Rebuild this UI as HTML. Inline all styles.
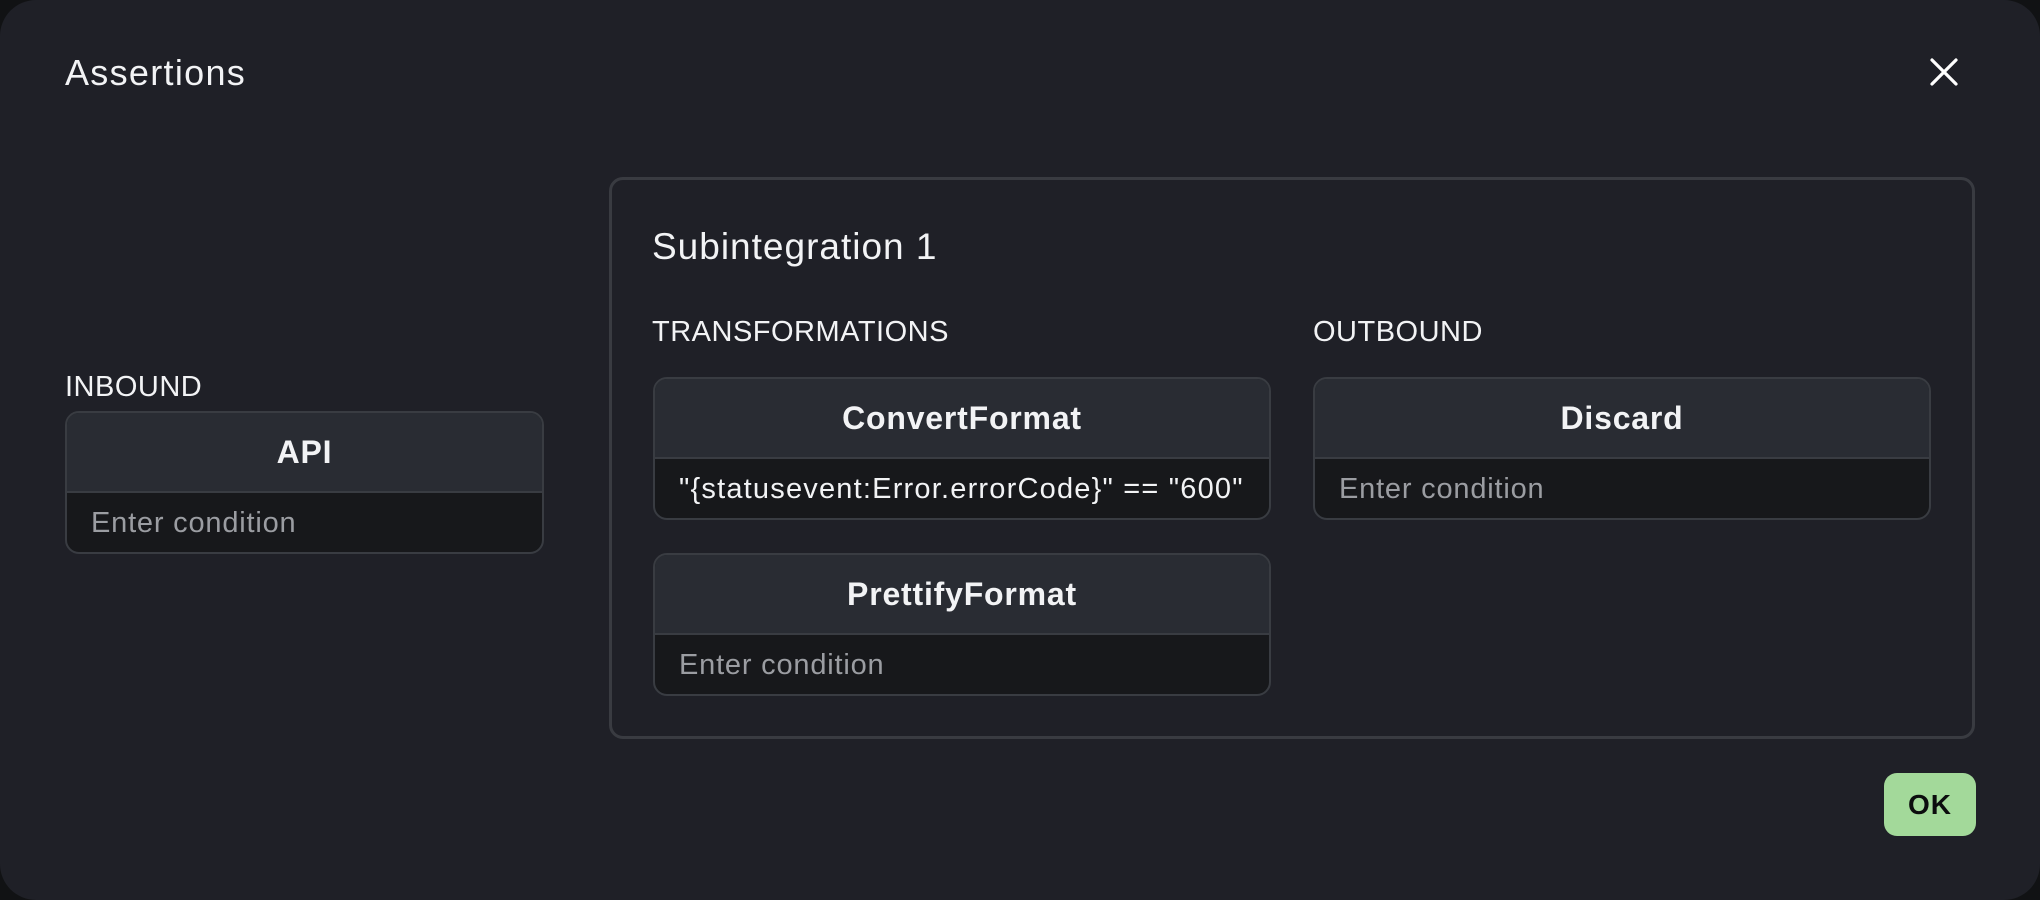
<!DOCTYPE html>
<html><head><meta charset="utf-8"><style>
*{box-sizing:border-box;margin:0;padding:0}
body{width:2040px;height:900px;background:#111214;font-family:"Liberation Sans",sans-serif;color:#f2f3f5;overflow:hidden}
.dlg{position:absolute;left:0;top:0;width:2040px;height:900px;background:#1f2027;border-radius:36px}
.t{position:absolute;white-space:nowrap}
.card{position:absolute;border:2px solid #393c42;border-radius:14px;overflow:hidden;background:#17181b}
.card .h{height:80px;background:#292c33;border-bottom:2px solid #393c42;display:flex;align-items:center;justify-content:center;font-weight:bold;font-size:32px;letter-spacing:.8px}
.card .b{height:60px;display:flex;align-items:center;padding-left:24px;font-size:29px;color:#9b9da2;letter-spacing:.8px}
.lbl{font-size:29px;letter-spacing:.5px}
</style></head><body>
<div class="dlg">
<div class="t" style="left:65px;top:52px;font-size:36px;letter-spacing:1.3px">Assertions</div>
<svg style="position:absolute;left:1929px;top:57px" width="30" height="30" viewBox="0 0 30 30"><path d="M3 3L27 27M27 3L3 27" stroke="#fff" stroke-width="3.2" stroke-linecap="round"/></svg>
<div class="t lbl" style="left:65px;top:371px">INBOUND</div>
<div class="card" style="left:65px;top:411px;width:479px;height:143px"><div class="h">API</div><div class="b">Enter condition</div></div>
<div style="position:absolute;left:609px;top:177px;width:1366px;height:562px;border:3px solid #393b41;border-radius:14px"></div>
<div class="t" style="left:652px;top:226px;font-size:37px;letter-spacing:1px">Subintegration 1</div>
<div class="t lbl" style="left:652px;top:316px">TRANSFORMATIONS</div>
<div class="t lbl" style="left:1313px;top:316px">OUTBOUND</div>
<div class="card" style="left:653px;top:377px;width:618px;height:143px"><div class="h">ConvertFormat</div><div class="b" style="color:#f2f3f5;font-size:29px;letter-spacing:1.2px">"{statusevent:Error.errorCode}" == "600"</div></div>
<div class="card" style="left:653px;top:553px;width:618px;height:143px"><div class="h">PrettifyFormat</div><div class="b">Enter condition</div></div>
<div class="card" style="left:1313px;top:377px;width:618px;height:143px"><div class="h">Discard</div><div class="b">Enter condition</div></div>
<div style="position:absolute;left:1884px;top:773px;width:92px;height:63px;background:#a3d99a;border-radius:13px;display:flex;align-items:center;justify-content:center;color:#0c0d0e;font-weight:900;font-size:28px;letter-spacing:1px">OK</div>
</div>
</body></html>
